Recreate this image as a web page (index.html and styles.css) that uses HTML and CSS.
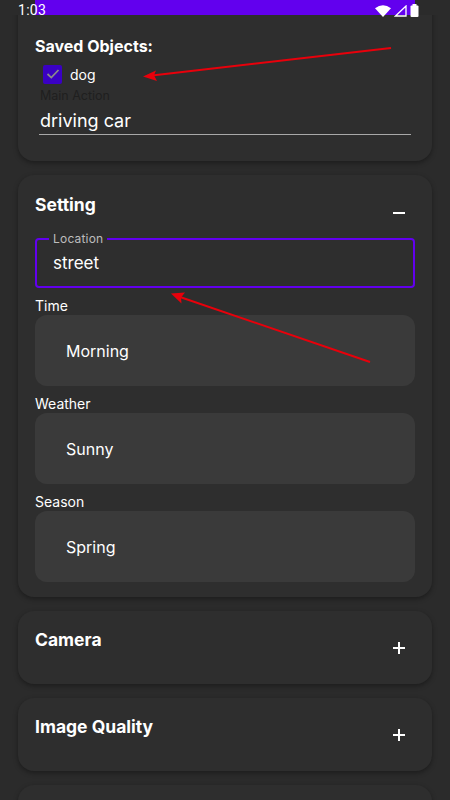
FILE: index.html
```html
<!DOCTYPE html>
<html>
<head>
<meta charset="utf-8">
<link rel="stylesheet" href="styles.css">
</head>
<body>
<div class="status">
  <div class="status-band">
    <span class="time">1:03</span>
    <div class="sicons">
      <svg width="16" height="12" viewBox="0 0 16 12"><path d="M0 3.2 Q8 -2.5 16 3.2 L8 12 Z" fill="#fff"/></svg>
      <svg width="13" height="12" viewBox="0 0 13 12"><path d="M12 1 L12 11 L1.5 11 Z" fill="none" stroke="#fff" stroke-width="1.3"/></svg>
      <svg width="9" height="13" viewBox="0 0 9 13"><rect x="2.5" y="0" width="4" height="2" fill="#fff"/><rect x="0.5" y="1.5" width="8" height="11.5" rx="1" fill="#fff"/></svg>
    </div>
  </div>
</div>

<main class="content">
  <section class="card card-first">
    <h2 class="card-title">Saved Objects:</h2>
    <label class="check-row">
      <span class="checkbox"><svg width="14" height="12" viewBox="0 0 14 12"><path d="M1.5 6 L5.3 9.6 L12.5 2" fill="none" stroke="#8a8a8a" stroke-width="1.8"/></svg></span>
      <span class="check-label">dog</span>
    </label>
    <div class="underline-field">
      <span class="uf-label">Main Action</span>
      <span class="uf-value">driving car</span>
    </div>
  </section>

  <section class="card card-setting">
    <div class="card-head">
      <h2 class="card-title">Setting</h2>
      <span class="toggle minus"></span>
    </div>
    <div class="outlined">
      <span class="ol-label">Location</span>
      <span class="ol-value">street</span>
    </div>
    <div class="field-label">Time</div>
    <div class="select-box">Morning</div>
    <div class="field-label">Weather</div>
    <div class="select-box">Sunny</div>
    <div class="field-label">Season</div>
    <div class="select-box">Spring</div>
  </section>

  <section class="card card-collapsed">
    <div class="card-head">
      <h2 class="card-title">Camera</h2>
      <span class="toggle plus"></span>
    </div>
  </section>

  <section class="card card-collapsed">
    <div class="card-head">
      <h2 class="card-title">Image Quality</h2>
      <span class="toggle plus"></span>
    </div>
  </section>

  <section class="card card-collapsed"></section>
</main>

<svg class="annot" width="450" height="800" viewBox="0 0 450 800">
  <line x1="391" y1="48" x2="152" y2="75.5" stroke="#e8000b" stroke-width="2"/>
  <path d="M143 76.5 L156 70.5 L154 75.2 L157 81 Z" fill="#e8000b"/>
  <line x1="370" y1="362" x2="180" y2="297" stroke="#e8000b" stroke-width="2"/>
  <path d="M171 293.5 L185 292.5 L181 297.5 L181.5 303.5 Z" fill="#e8000b"/>
</svg>
</body>
</html>
```

FILE: styles.css
```css
* { box-sizing: border-box; }
html, body { margin: 0; padding: 0; }
body {
  width: 450px;
  height: 800px;
  overflow: hidden;
  background: #2b2b2b;
  font-family: Inter, Roboto, sans-serif;
  color: #fff;
  position: relative;
}
.status {
  position: relative;
  z-index: 2;
  height: 15px;
  background: #2b2b2b;
  padding: 0 35px;
}
.status-band {
  height: 15px;
  background: #6200ee;
  display: flex;
  justify-content: space-between;
  align-items: flex-start;
  padding-right: -4px;
}
.time {
  font-family: Roboto, sans-serif;
  font-size: 14px;
  line-height: 14px;
  margin-top: 3px;
  margin-left: -17px;
  letter-spacing: 0.3px;
}
.sicons {
  display: flex;
  align-items: flex-end;
  gap: 3px;
  margin-top: 4px;
  margin-right: -4px;
}
.content {
  padding: 0 18px;
  display: flex;
  flex-direction: column;
  gap: 14px;
}
.card {
  background: #2e2e2e;
  border-radius: 16px;
  box-shadow: 0 2px 5px rgba(0,0,0,0.35);
  padding: 19px 17px 15px;
}
.card-first {
  margin-top: -25px;
  padding-top: 46px;
  padding-bottom: 26px;
}
.card-setting { padding-top: 20px; }
.card-title {
  margin: 0;
  font-size: 17.5px;
  line-height: 20px;
  font-weight: 700;
  color: #fff;
}
.card-first .card-title { font-size: 16px; }
.check-row {
  display: flex;
  align-items: center;
  margin: 8px 0 0 8px;
  height: 20px;
}
.checkbox {
  width: 19px;
  height: 19px;
  border-radius: 2px;
  background: #3a00c4;
  display: flex;
  align-items: center;
  justify-content: center;
}
.check-label {
  margin-left: 8px;
  font-size: 14px;
}
.underline-field {
  margin: 4px 4px 0 4px;
  display: flex;
  flex-direction: column;
  border-bottom: 1px solid #a8a8a8;
}
.uf-label {
  font-size: 12.5px;
  line-height: 16px;
  color: #1f1f1f;
  padding-left: 1px;
}
.uf-value {
  font-size: 18px;
  line-height: 22px;
  margin-top: 6px;
  padding-bottom: 2px;
  padding-left: 1px;
}
.card-head {
  display: flex;
  justify-content: space-between;
  align-items: flex-start;
}
.card-collapsed {
  height: 73px;
}
.toggle {
  width: 12px;
  height: 12px;
  margin-top: 12px;
  margin-right: 10px;
  position: relative;
}
.toggle::before, .toggle.plus::after {
  content: "";
  position: absolute;
  background: #fff;
}
.toggle::before {
  left: 0; right: 0; top: 5px; height: 2px;
}
.toggle.plus::after {
  top: 0; bottom: 0; left: 5px; width: 2px;
}
.outlined {
  position: relative;
  margin-top: 19px;
  height: 50px;
  border: 2px solid #6200ee;
  border-radius: 4px;
  padding: 12px 16px 0;
}
.ol-label {
  position: absolute;
  top: -9px;
  left: 12px;
  padding: 0 4px;
  background: #2e2e2e;
  font-size: 12px;
  line-height: 15px;
  color: #bdbdbd;
  letter-spacing: 0.2px;
}
.ol-value {
  font-size: 17px;
  line-height: 22px;
}
.field-label {
  font-size: 14px;
  line-height: 17px;
  margin-top: 9px;
  margin-bottom: 1px;
}
.select-box {
  height: 71px;
  background: #3a3a3a;
  border-radius: 12px;
  display: flex;
  align-items: center;
  padding-left: 31px;
  font-size: 16px;
}
.annot {
  position: absolute;
  left: 0;
  top: 0;
  pointer-events: none;
  z-index: 3;
}
```
